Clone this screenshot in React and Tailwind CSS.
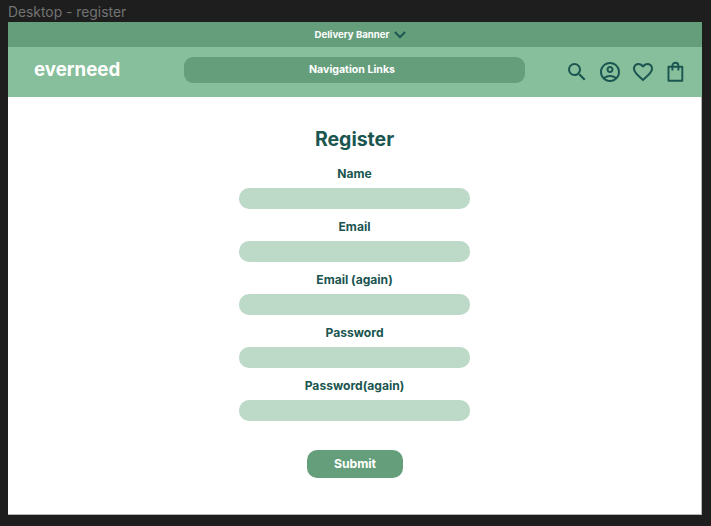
import { MdSearch, MdOutlineAccountCircle, MdFavoriteBorder } from "react-icons/md";

const fields = ["Name", "Email", "Email (again)", "Password", "Password(again)"];

function BagIcon() {
  return (
    <svg viewBox="0 0 24 24" className="size-6" fill="none" stroke="currentColor" strokeWidth="1.9" strokeLinejoin="round">
      <path d="M5.5 6.7h13.8v14.1H5.5z" />
      <path d="M9.4 10.6V5.8a3 3 0 0 1 6 0v4.8" />
    </svg>
  );
}

function Header() {
  return (
    <header>
      <div className="flex h-[25px] items-center justify-center gap-[5px] bg-[#659e7b] pl-[11px]">
        <span className="text-[9.65px] leading-3 font-bold text-white">Delivery Banner</span>
        <svg viewBox="0 0 12 8" className="h-2 w-3" fill="none" stroke="#1a5550" strokeWidth="1.9">
          <path d="M0.9 1 6 6.1 11.1 1" />
        </svg>
      </div>
      <div className="flex h-[50px] items-start bg-[#87be9b] pl-[26px]">
        <div className="mt-[10px] w-[150px] text-[18.7px] leading-[26px] font-bold text-white">everneed</div>
        <nav className="mt-[10px] flex h-[26px] w-[341px] items-center justify-center rounded-[9px] bg-[#659e7b] pr-[5px] pb-px text-[10.6px] leading-[13px] font-bold text-white">
          Navigation Links
        </nav>
        <div className="mt-[13px] ml-[40px] flex gap-[8.8px] text-[#1a5550]">
          <MdSearch className="size-6" />
          <MdOutlineAccountCircle className="size-6" />
          <MdFavoriteBorder className="size-6" />
          <BagIcon />
        </div>
      </div>
    </header>
  );
}

export default function App() {
  return (
    <div className="h-[526px] w-[711px] overflow-hidden bg-[#1e1e1e] pl-2 font-['Inter',sans-serif]">
      <div className="h-[22px] pt-[3px] text-[13.85px] leading-[18px] text-[#737373]">Desktop - register</div>
      <main className="h-[493px] w-[694px] border-r border-b border-[#b5b8b6] bg-white">
        <div className="-mr-px">
          <Header />
        </div>
        <form className="flex flex-col items-center text-[#1a5550]">
          <h1 className="mt-[30px] text-[19.5px] leading-6 font-bold">Register</h1>
          <div className="mt-[15px] flex flex-col gap-[9px]">
            {fields.map((label) => (
              <label key={label} className="block h-[44px] text-center text-[12.1px] leading-4 font-bold">
                {label}
                <span className="mt-[6px] block h-[21px] w-[230.5px] rounded-[10px] bg-[#bddac8]" />
              </label>
            ))}
          </div>
          <button type="button" className="mt-[28px] ml-px h-[28px] w-[96px] rounded-[10px] bg-[#659e7b] text-[12.2px] leading-4 font-bold text-white">
            Submit
          </button>
        </form>
      </main>
    </div>
  );
}
